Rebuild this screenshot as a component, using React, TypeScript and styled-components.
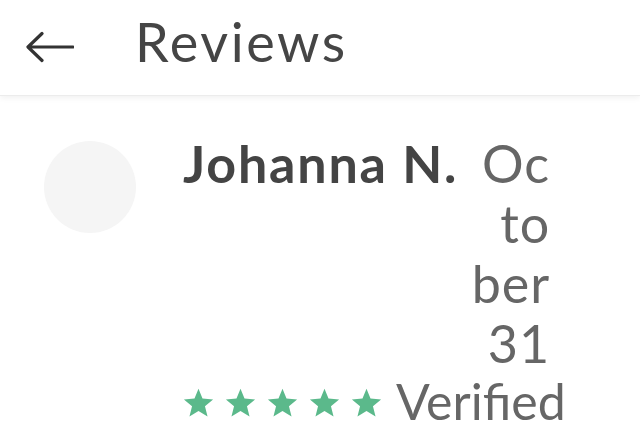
import styled, { createGlobalStyle } from 'styled-components';

const GlobalStyle = createGlobalStyle`
  html, body {
    margin: 0;
    padding: 0;
    background: #fff;
    font-family: Lato, "Open Sans", sans-serif;
  }
`;

const Page = styled.div`
  width: 640px;
  height: 427px;
  overflow: hidden;
  display: flex;
  flex-direction: column;
`;

const Header = styled.div`
  height: 95px;
  flex-shrink: 0;
  display: flex;
  align-items: center;
  background: #fff;
  border-bottom: 1px solid #ececec;
  box-shadow: 0 2px 6px rgba(0, 0, 0, 0.06);
  position: relative;
  z-index: 1;
`;

const BackButton = styled.button`
  width: 48px;
  height: 48px;
  margin-left: 26px;
  padding: 0;
  border: none;
  background: none;
  display: flex;
  align-items: center;
  justify-content: center;
  cursor: pointer;
`;

const Title = styled.h1`
  margin: -12px 0 0 61px;
  font-size: 54px;
  font-weight: 400;
  color: #454545;
  letter-spacing: 2.6px;
`;

const ReviewRow = styled.div`
  display: flex;
  align-items: flex-start;
  padding: 37px 0 0 44px;
  gap: 47px;
`;

const Avatar = styled.div`
  width: 92px;
  height: 92px;
  margin-top: 8px;
  border-radius: 50%;
  background: #f5f5f5;
  flex-shrink: 0;
`;

const Body = styled.div`
  display: flex;
  flex-direction: column;
`;

const TopLine = styled.div`
  display: flex;
  align-items: flex-start;
  gap: 12px;
`;

const Name = styled.span`
  font-size: 52px;
  line-height: 60px;
  font-weight: 700;
  color: #444;
  letter-spacing: 1.8px;
  white-space: nowrap;
`;

const DateText = styled.span`
  width: 80px;
  font-size: 52px;
  line-height: 60px;
  color: #666;
  letter-spacing: 1px;
  text-align: right;
`;

const DateLine = styled.span`
  display: block;
`;

const RatingLine = styled.div`
  display: flex;
  align-items: center;
  gap: 14px;
  margin-top: 6px;
`;

const Stars = styled.div`
  display: flex;
  gap: 11px;
  margin-top: 4px;
`;

const Verified = styled.span`
  font-size: 50px;
  line-height: 44px;
  color: #666;
`;

const Star = ({ color }: { color: string }) => (
  <svg width="31" height="30" viewBox="0 0 24 23">
    <path
      d="M12 0.5l3.1 7.6 8.2 0.6-6.3 5.3 2 8-7-4.3-7 4.3 2-8L0.7 8.7l8.2-0.6z"
      fill={color}
    />
  </svg>
);

// the date column is narrow in the app, so it is set one piece per line
const dateLines = ['Oc', 'to', 'ber', '31'];

const App = () => {
  const rating = 5;

  return (
    <Page>
      <GlobalStyle />
      <Header>
        <BackButton aria-label="Back">
          <svg width="48" height="34" viewBox="0 0 48 34" fill="none">
            <path
              d="M47 16H3M16 2.5L2 16l14 13.5"
              stroke="#333"
              strokeWidth="3.2"
              strokeLinecap="round"
              strokeLinejoin="round"
            />
          </svg>
        </BackButton>
        <Title>Reviews</Title>
      </Header>

      <ReviewRow>
        <Avatar />
        <Body>
          <TopLine>
            <Name>Johanna N.</Name>
            <DateText>
              {dateLines.map((part) => (
                <DateLine key={part}>{part}</DateLine>
              ))}
            </DateText>
          </TopLine>
          <RatingLine>
            <Stars>
              {Array.from({ length: 5 }, (_, i) => (
                <Star key={i} color={i < rating ? '#5bb98b' : '#ddd'} />
              ))}
            </Stars>
            <Verified>Verified</Verified>
          </RatingLine>
        </Body>
      </ReviewRow>
    </Page>
  );
};

export default App;
